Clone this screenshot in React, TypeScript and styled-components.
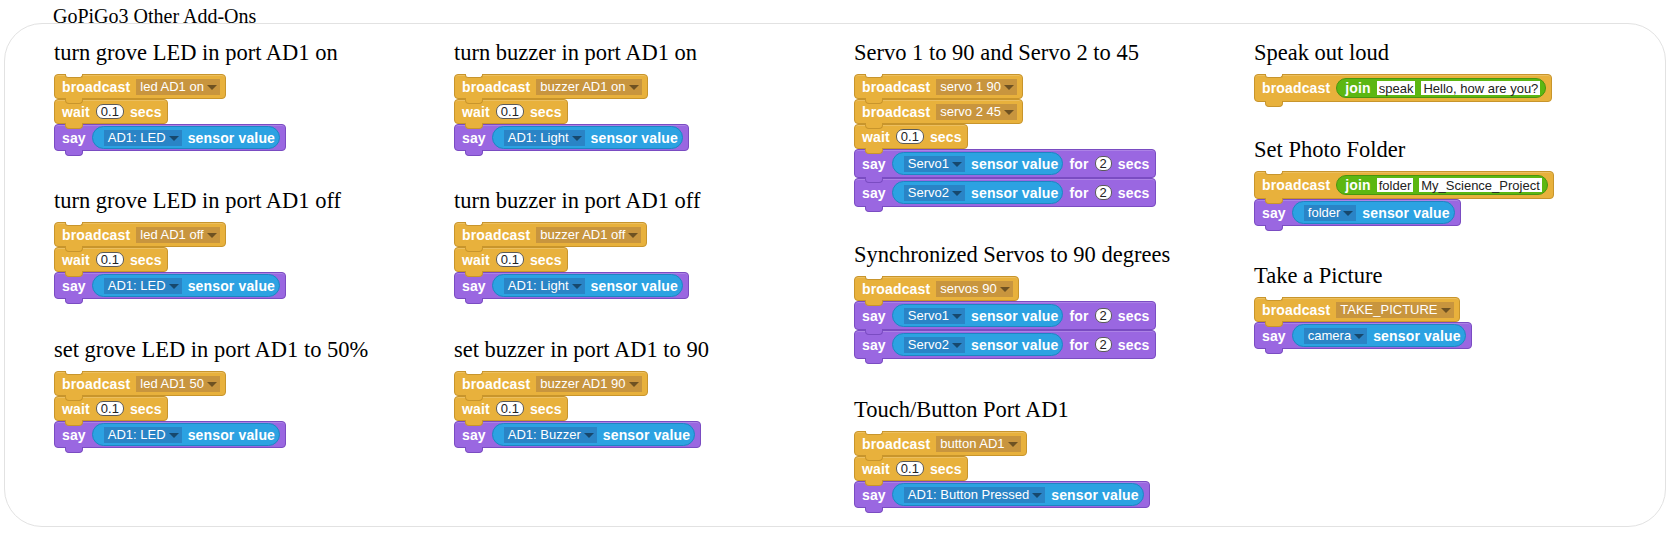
import styled, { createGlobalStyle } from 'styled-components';

const GlobalStyle = createGlobalStyle`
  body {
    margin: 0;
    background: #fff;
  }
`;

const palette = {
  events: { fill: '#e8b13c', edge: '#c8952c', field: '#c8953e' },
  looks: { fill: '#9a67e1', edge: '#7a4cc2', field: '#7a4cc2' },
  sensing: { fill: '#2ca2e2', edge: '#1d86c2', field: '#2a84c6' },
  operators: { fill: '#5cb712', edge: '#479510', field: '#479510' },
};

type Category = 'events' | 'looks';

type Part =
  | string
  | { kind: 'menu'; text: string }
  | { kind: 'num'; text: string }
  | { kind: 'sensor'; text: string }
  | { kind: 'join'; a: string; b: string };

interface BlockSpec {
  cat: Category;
  parts: Part[];
}

interface SectionSpec {
  title: string;
  blocks: BlockSpec[];
  gap?: number;
}

const Page = styled.div`
  padding: 0 6px 0 4px;
`;

const Title = styled.div`
  font-family: 'Liberation Serif', 'Times New Roman', serif;
  font-size: 20px;
  line-height: 20px;
  color: #000;
  padding-top: 6px;
  margin: 0 0 -3px 49px;
`;

const Frame = styled.div`
  border: 1px solid #e2e2e2;
  border-radius: 38px;
  padding: 16px 0 18px 49px;
  display: grid;
  grid-template-columns: repeat(4, 400px);
  align-items: start;
`;

const Column = styled.div`
  display: flex;
  flex-direction: column;
`;

const Section = styled.section<{ $gap: number }>`
  margin-bottom: ${(p) => p.$gap}px;

  &:last-child {
    margin-bottom: 0;
  }
`;

const Heading = styled.h3`
  margin: 0 0 8px;
  font-family: 'Liberation Serif', 'Times New Roman', serif;
  font-weight: normal;
  font-size: 22.5px;
  line-height: 26px;
  color: #000;
  white-space: nowrap;
`;

const Stack = styled.div`
  display: flex;
  flex-direction: column;
  align-items: flex-start;
`;

const Block = styled.div<{ $cat: Category; $first?: boolean; $tall?: boolean }>`
  position: relative;
  box-sizing: border-box;
  display: inline-flex;
  align-items: center;
  gap: 6px;
  min-height: ${(p) => (p.$tall ? 29 : 25)}px;
  padding: 1px 5px 1px 7px;
  background: ${(p) => palette[p.$cat].fill};
  border: 1px solid ${(p) => palette[p.$cat].edge};
  border-radius: 4px;
  box-shadow: inset 0 1px 0 rgba(255, 255, 255, 0.18);
  font-family: 'Liberation Sans', Arial, sans-serif;
  font-weight: bold;
  font-size: 14px;
  letter-spacing: 0.15px;
  color: #fff;

  &::after {
    content: '';
    position: absolute;
    top: 100%;
    left: 10px;
    width: 16px;
    height: 5px;
    background: ${(p) => palette[p.$cat].fill};
    border: 1px solid ${(p) => palette[p.$cat].edge};
    border-top: none;
    border-radius: 0 0 4px 4px;
    z-index: 2;
  }

  ${(p) =>
    p.$first &&
    `
    &::before {
      content: '';
      position: absolute;
      top: -1px;
      left: 10px;
      width: 16px;
      height: 3px;
      background: #fff;
      border: 1px solid ${palette[p.$cat].edge};
      border-top: none;
      border-radius: 0 0 3px 3px;
      z-index: 1;
    }
  `}
`;

const Word = styled.span`
  white-space: nowrap;
`;

const Menu = styled.span<{ $tone: 'events' | 'sensing' }>`
  display: inline-flex;
  align-items: center;
  gap: 3px;
  height: 16px;
  padding: 0 3px 0 4px;
  background: ${(p) => palette[p.$tone].field};
  color: #fff;
  font-weight: normal;
  font-size: 13px;
  letter-spacing: 0;
  white-space: nowrap;
`;

const Arrow = styled.span`
  width: 0;
  height: 0;
  margin-top: 1px;
  border-left: 5px solid transparent;
  border-right: 5px solid transparent;
  border-top: 5px solid rgba(0, 0, 0, 0.45);
`;

const NumberField = styled.span`
  box-sizing: border-box;
  display: inline-flex;
  align-items: center;
  justify-content: center;
  height: 15px;
  padding: 0 4px;
  background: #fff;
  border: 1px solid #5a5a5a;
  border-radius: 7px;
  color: #222;
  font-weight: normal;
  font-size: 13px;
  line-height: 12px;
  letter-spacing: 0;
`;

const Reporter = styled.span`
  box-sizing: border-box;
  display: inline-flex;
  align-items: center;
  gap: 6px;
  height: 23px;
  padding: 0 4px 0 11px;
  background: ${palette.sensing.fill};
  border: 1px solid ${palette.sensing.edge};
  border-radius: 12px;
  white-space: nowrap;
`;

const Join = styled.span`
  box-sizing: border-box;
  display: inline-flex;
  align-items: center;
  gap: 6px;
  height: 20px;
  margin: 2px 0;
  padding: 0 5px 0 8px;
  background: ${palette.operators.fill};
  border: 1px solid ${palette.operators.edge};
  border-radius: 10px;
`;

const TextField = styled.span`
  display: inline-flex;
  align-items: center;
  height: 14px;
  padding: 0 2px;
  background: #fff;
  color: #222;
  font-weight: normal;
  font-size: 13px;
  letter-spacing: 0;
  white-space: nowrap;
`;

const broadcast = (text: string): BlockSpec => ({ cat: 'events', parts: ['broadcast', { kind: 'menu', text }] });
const broadcastJoin = (a: string, b: string): BlockSpec => ({
  cat: 'events',
  parts: ['broadcast', { kind: 'join', a, b }],
});
const wait = (): BlockSpec => ({ cat: 'events', parts: ['wait', { kind: 'num', text: '0.1' }, 'secs'] });
const say = (sensor: string, secs?: string): BlockSpec => ({
  cat: 'looks',
  parts: ['say', { kind: 'sensor', text: sensor }, ...(secs ? ['for', { kind: 'num' as const, text: secs }, 'secs'] : [])],
});

const columns: SectionSpec[][] = [
  [
    { title: 'turn grove LED in port AD1 on', blocks: [broadcast('led AD1 on'), wait(), say('AD1: LED')], gap: 37 },
    { title: 'turn grove LED in port AD1 off', blocks: [broadcast('led AD1 off'), wait(), say('AD1: LED')], gap: 38 },
    { title: 'set grove LED in port AD1 to 50%', blocks: [broadcast('led AD1 50'), wait(), say('AD1: LED')] },
  ],
  [
    { title: 'turn buzzer in port AD1 on', blocks: [broadcast('buzzer AD1 on'), wait(), say('AD1: Light')], gap: 37 },
    { title: 'turn buzzer in port AD1 off', blocks: [broadcast('buzzer AD1 off'), wait(), say('AD1: Light')], gap: 38 },
    { title: 'set buzzer in port AD1 to 90', blocks: [broadcast('buzzer AD1 90'), wait(), say('AD1: Buzzer')] },
  ],
  [
    {
      title: 'Servo 1 to 90 and Servo 2 to 45',
      blocks: [broadcast('servo 1 90'), broadcast('servo 2 45'), wait(), say('Servo1', '2'), say('Servo2', '2')],
      gap: 35,
    },
    {
      title: 'Synchronized Servos to 90 degrees',
      blocks: [broadcast('servos 90'), say('Servo1', '2'), say('Servo2', '2')],
      gap: 38,
    },
    { title: 'Touch/Button Port AD1', blocks: [broadcast('button AD1'), wait(), say('AD1: Button Pressed')] },
  ],
  [
    { title: 'Speak out loud', blocks: [broadcastJoin('speak', 'Hello, how are you?')], gap: 35 },
    { title: 'Set Photo Folder', blocks: [broadcastJoin('folder', 'My_Science_Project'), say('folder')], gap: 37 },
    { title: 'Take a Picture', blocks: [broadcast('TAKE_PICTURE'), say('camera')] },
  ],
];

function renderPart(part: Part, key: number) {
  if (typeof part === 'string') {
    return <Word key={key}>{part}</Word>;
  }
  switch (part.kind) {
    case 'menu':
      return (
        <Menu key={key} $tone="events">
          {part.text}
          <Arrow />
        </Menu>
      );
    case 'num':
      return <NumberField key={key}>{part.text}</NumberField>;
    case 'sensor':
      return (
        <Reporter key={key}>
          <Menu $tone="sensing">
            {part.text}
            <Arrow />
          </Menu>
          <Word>sensor value</Word>
        </Reporter>
      );
    case 'join':
      return (
        <Join key={key}>
          <Word>join</Word>
          <TextField>{part.a}</TextField>
          <TextField>{part.b}</TextField>
        </Join>
      );
  }
}

function Script({ blocks }: { blocks: BlockSpec[] }) {
  return (
    <Stack>
      {blocks.map((b, i) => (
        <Block key={i} $cat={b.cat} $first={i === 0} $tall={b.parts.includes('for')}>
          {b.parts.map(renderPart)}
        </Block>
      ))}
    </Stack>
  );
}

export default function App() {
  return (
    <Page>
      <GlobalStyle />
      <Title>GoPiGo3 Other Add-Ons</Title>
      <Frame>
        {columns.map((sections, c) => (
          <Column key={c}>
            {sections.map((s) => (
              <Section key={s.title} $gap={s.gap ?? 0}>
                <Heading>{s.title}</Heading>
                <Script blocks={s.blocks} />
              </Section>
            ))}
          </Column>
        ))}
      </Frame>
    </Page>
  );
}
